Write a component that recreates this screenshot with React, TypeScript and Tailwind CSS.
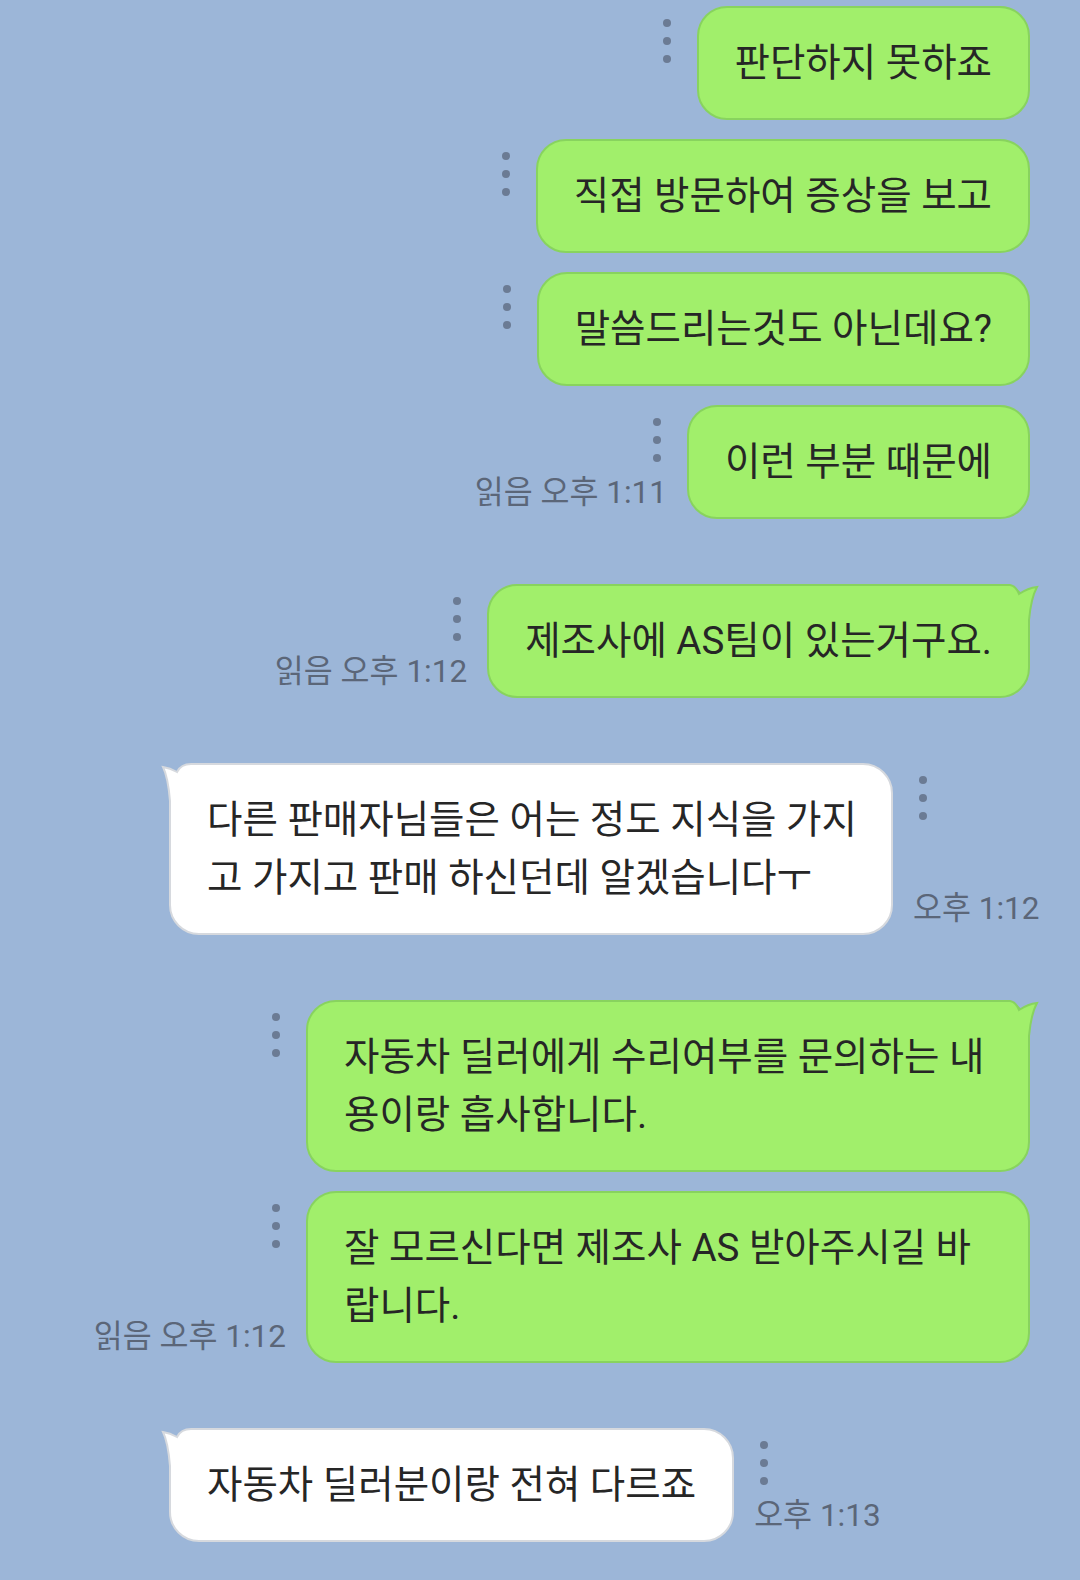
import React from 'react';

type Msg = {
  id: number;
  mine: boolean;
  lines: string[];
  time?: string;
  tail?: boolean;
  first?: boolean;
  wide?: boolean;
};

const messages: Msg[] = [
  { id: 1, mine: true, lines: ['판단하지 못하죠'], first: true },
  { id: 2, mine: true, lines: ['직접 방문하여 증상을 보고'] },
  { id: 3, mine: true, lines: ['말씀드리는것도 아닌데요?'] },
  { id: 4, mine: true, lines: ['이런 부분 때문에'], time: '읽음 오후 1:11' },
  { id: 5, mine: true, lines: ['제조사에 AS팀이 있는거구요.'], time: '읽음 오후 1:12', tail: true, first: true },
  {
    id: 6,
    mine: false,
    lines: ['다른 판매자님들은 어는 정도 지식을 가지', '고 가지고 판매 하신던데 알겠습니다ㅜ'],
    time: '오후 1:12',
    tail: true,
    first: true,
    wide: true,
  },
  {
    id: 7,
    mine: true,
    lines: ['자동차 딜러에게 수리여부를 문의하는 내', '용이랑 흡사합니다.'],
    tail: true,
    first: true,
    wide: true,
  },
  {
    id: 8,
    mine: true,
    lines: ['잘 모르신다면 제조사 AS 받아주시길 바', '랍니다.'],
    time: '읽음 오후 1:12',
    wide: true,
  },
  { id: 9, mine: false, lines: ['자동차 딜러분이랑 전혀 다르죠'], time: '오후 1:13', tail: true, first: true },
];

const SentTail = () => (
  <svg className="absolute -top-[2px] -right-[12px]" width="50" height="50" viewBox="0 0 50 50">
    <path d="M0,1 L20,1 Q26,2 29,10 Q38,4 47,3 Q41,14 39,36 L39,50 L0,50 Z" fill="#a1ef6b" />
    <path d="M0,1 L20,1 Q26,2 29,10 Q38,4 47,3 Q41,14 39,36 L39,50" fill="none" stroke="#88d35e" strokeWidth="2" />
  </svg>
);

const RecvTail = () => (
  <svg className="absolute -top-[2px] -left-[12px]" width="50" height="50" viewBox="0 0 50 50">
    <path d="M50,1 L32,1 Q22,1 18,9 Q11,5 4,4 Q9,14 11,38 L11,50 L50,50 Z" fill="#ffffff" />
    <path d="M50,1 L32,1 Q22,1 18,9 Q11,5 4,4 Q9,14 11,38 L11,50" fill="none" stroke="#d6d9de" strokeWidth="2" />
  </svg>
);

const Dots: React.FC<{ mine: boolean }> = ({ mine }) => (
  <div className={`flex flex-col gap-[10px] pt-[13px] ${mine ? 'mr-[6px]' : 'ml-[6px]'}`}>
    <span className="block w-[8px] h-[8px] rounded-full bg-[#6b7b94]" />
    <span className="block w-[8px] h-[8px] rounded-full bg-[#6b7b94]" />
    <span className="block w-[8px] h-[8px] rounded-full bg-[#6b7b94]" />
  </div>
);

const Bubble: React.FC<{ msg: Msg }> = ({ msg }) => {
  const meta = (
    <div className={`flex flex-col justify-between self-stretch ${msg.mine ? 'items-end' : 'items-start'}`}>
      <Dots mine={msg.mine} />
      {msg.time && (
        <span className="pb-[8px] text-[31.5px] leading-[36px] text-[#5b6678] whitespace-nowrap">{msg.time}</span>
      )}
    </div>
  );

  return (
    <div
      className={`flex gap-[20px] ${msg.mine ? 'justify-end pr-[50px]' : 'justify-start pl-[169px]'} ${
        msg.first ? 'mt-[65px] first:mt-0' : 'mt-[19px]'
      }`}
    >
      {msg.mine && meta}
      <div
        className={`relative rounded-[30px] border-2 px-[36px] py-[26px] text-[38.5px] leading-[58px] text-[#262626] whitespace-nowrap ${
          msg.wide ? 'w-[724px]' : ''
        } ${msg.mine ? 'bg-[#a1ef6b] border-[#88d35e]' : 'bg-white border-[#d6d9de]'}`}
      >
        {msg.lines.map((l, i) => (
          <div key={i}>{l}</div>
        ))}
        {msg.tail && (msg.mine ? <SentTail /> : <RecvTail />)}
      </div>
      {!msg.mine && meta}
    </div>
  );
};

export default function App() {
  return (
    <div className="w-[1080px] h-[1580px] overflow-hidden bg-[#9cb6d8] pt-[6px] font-['Roboto','Noto_Sans_CJK_KR',sans-serif]">
      {messages.map(m => (
        <Bubble key={m.id} msg={m} />
      ))}
    </div>
  );
}
